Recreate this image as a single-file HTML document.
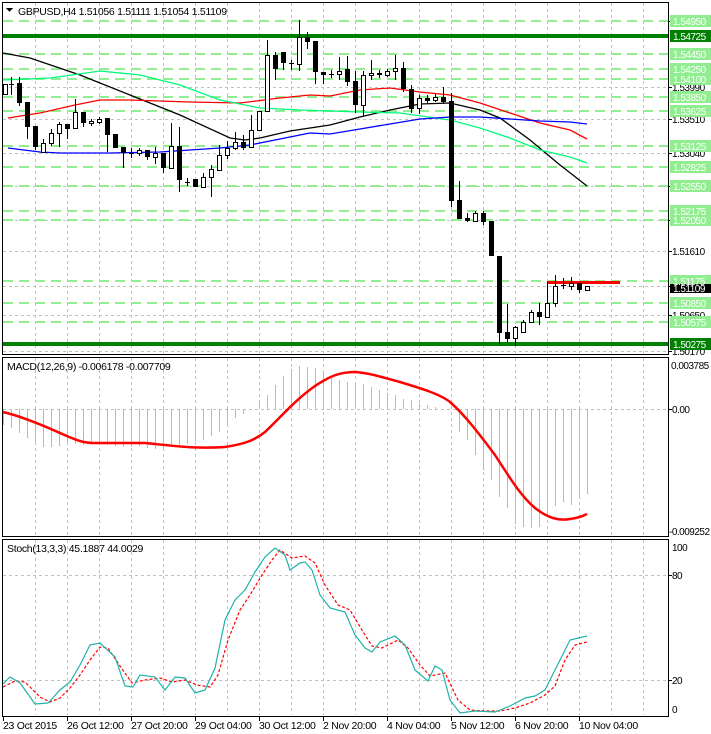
<!DOCTYPE html>
<html><head><meta charset="utf-8"><style>
html,body{margin:0;padding:0;background:#fff;width:711px;height:734px;overflow:hidden}
svg{display:block;font-family:"Liberation Sans",sans-serif;font-size:10.5px;letter-spacing:-0.3px}
.p{font-size:10px;letter-spacing:-0.5px}
</style></head><body>
<svg width="711" height="734" viewBox="0 0 711 734" xmlns="http://www.w3.org/2000/svg" shape-rendering="crispEdges">
<rect width="711" height="734" fill="#fff"/>
<g stroke="#c0c0c0" stroke-dasharray="3,3">
<path d="M35.5 3V353M67.5 3V353M99.5 3V353M131.5 3V353M163.5 3V353M195.5 3V353M227.5 3V353M259.5 3V353M291.5 3V353M323.5 3V353M355.5 3V353M387.5 3V353M419.5 3V353M451.5 3V353M483.5 3V353M515.5 3V353M547.5 3V353M579.5 3V353M611.5 3V353M643.5 3V353"/>
<path d="M35.5 358V536M67.5 358V536M99.5 358V536M131.5 358V536M163.5 358V536M195.5 358V536M227.5 358V536M259.5 358V536M291.5 358V536M323.5 358V536M355.5 358V536M387.5 358V536M419.5 358V536M451.5 358V536M483.5 358V536M515.5 358V536M547.5 358V536M579.5 358V536M611.5 358V536M643.5 358V536"/>
<path d="M35.5 540V715M67.5 540V715M99.5 540V715M131.5 540V715M163.5 540V715M195.5 540V715M227.5 540V715M259.5 540V715M291.5 540V715M323.5 540V715M355.5 540V715M387.5 540V715M419.5 540V715M451.5 540V715M483.5 540V715M515.5 540V715M547.5 540V715M579.5 540V715M611.5 540V715M643.5 540V715"/>
<path d="M3 87.5H668M3 119.5H668M3 153.5H668M3 186.5H668M3 220.5H668M3 251.5H668M3 286.5H668M3 315.5H668M3 351.5H668"/>
<path d="M3 409.5H668M3 575.5H668M3 680.5H668"/>
</g>
<g stroke="#90ee90" stroke-width="2" stroke-dasharray="10,6">
<path d="M3 21H668M3 54H668M3 69H668M3 79H668M3 97H668M3 111H668M3 146H668M3 167H668M3 186H668M3 211H668M3 220H668M3 281H668M3 303H668M3 322H668"/>
</g>
<g stroke="#008000" stroke-width="4"><path d="M3 36H668M3 344H668"/></g>
<g fill="none" stroke-width="1.3" shape-rendering="auto">
<polyline stroke="#000" points="3,53 30,58 80,75 130,95 180,115 230,138 245,140 260,138 290,131 330,125 360,117 390,110 420,104 450,103 480,110 500,118 530,140 560,165 587,186"/>
<polyline stroke="#ff0000" points="8,118 40,113 75,105 100,100 130,100 190,102 240,103 280,98 310,95 330,96 360,90 390,88 420,92 450,95 480,103 510,113 540,123 570,130 587,139"/>
<polyline stroke="#00fa7a" points="3,80 50,78 100,71 140,75 180,85 220,100 260,108 300,110 330,111 360,112 400,113 450,120 480,128 510,138 540,150 570,157 587,163"/>
<polyline stroke="#0000ff" points="8,148 40,152 60,153 110,153 160,152 220,148 250,145 280,139 310,133 330,134 360,129 390,124 420,119 450,117 480,117 510,119 540,121 570,122 587,124"/>
</g>
<rect x="547" y="281" width="73" height="3" fill="#ff0000"/>
<g stroke="#000"><path d="M11.5 77V95M19.5 77V106M27.5 102V139M35.5 126V150M43.5 139V153M51.5 129V146M59.5 122V147M67.5 124V139M75.5 99V129M83.5 112V127M91.5 119V126M99.5 117V124M107.5 118V152M115.5 134V148M123.5 147V168M131.5 148V158M139.5 148V156M147.5 150V160M155.5 147V164M163.5 153V173M171.5 123V168M179.5 127V192M187.5 178V186M195.5 179V187M203.5 173V187M211.5 165V197M219.5 145V170M227.5 141V159M235.5 132V150M243.5 135V150M251.5 115V147M259.5 111V130M267.5 40V111M275.5 52V80M283.5 52V70M291.5 60V70M299.5 20V71M307.5 32V49M315.5 41V84M323.5 72V84M331.5 70V78M339.5 57V80M347.5 56V86M355.5 71V113M363.5 71V116M371.5 60V80M379.5 70V78M387.5 69V77M395.5 55V80M403.5 62V92M411.5 85V113M419.5 95V114M427.5 95V103M435.5 94V102M443.5 87V104M451.5 93V207M459.5 181V219M467.5 213V222M475.5 211V222M483.5 211V225M491.5 221V256M499.5 256V344M507.5 304V342M515.5 326V346M523.5 320V332M531.5 310V322M539.5 303V325M547.5 282V317M555.5 275V307M563.5 278V289M571.5 277V290M579.5 283V293"/></g>
<g fill="#000">
<rect x="17" y="83" width="5" height="20"/><rect x="25" y="102" width="5" height="25"/><rect x="33" y="126" width="5" height="21"/><rect x="65" y="124" width="5" height="5"/><rect x="81" y="112" width="5" height="11"/><rect x="105" y="118" width="5" height="17"/><rect x="113" y="134" width="5" height="14"/><rect x="121" y="147" width="5" height="6"/><rect x="145" y="150" width="5" height="7"/><rect x="161" y="153" width="5" height="15"/><rect x="177" y="146" width="5" height="34"/><rect x="193" y="179" width="5" height="8"/><rect x="241" y="142" width="5" height="6"/><rect x="273" y="55" width="5" height="14"/><rect x="281" y="52" width="5" height="11"/><rect x="305" y="37" width="5" height="5"/><rect x="313" y="41" width="5" height="31"/><rect x="321" y="72" width="5" height="3"/><rect x="345" y="69" width="5" height="13"/><rect x="353" y="81" width="5" height="24"/><rect x="377" y="73" width="5" height="2"/><rect x="401" y="68" width="5" height="21"/><rect x="409" y="89" width="5" height="20"/><rect x="425" y="98" width="5" height="3"/><rect x="441" y="97" width="5" height="5"/><rect x="449" y="101" width="5" height="100"/><rect x="457" y="200" width="5" height="19"/><rect x="465" y="218" width="5" height="3"/><rect x="481" y="213" width="5" height="9"/><rect x="489" y="221" width="5" height="35"/><rect x="497" y="256" width="5" height="77"/><rect x="505" y="332" width="5" height="7"/><rect x="537" y="312" width="5" height="5"/><rect x="577" y="283" width="5" height="7"/>
</g>
<g fill="#fff" stroke="#000">
<rect x="3.5" y="84.5" width="4" height="10"/><rect x="41.5" y="143.5" width="4" height="9"/><rect x="49.5" y="133.5" width="4" height="10"/><rect x="57.5" y="124.5" width="4" height="9"/><rect x="73.5" y="112.5" width="4" height="16"/><rect x="89.5" y="121.5" width="4" height="2"/><rect x="97.5" y="119.5" width="4" height="3"/><rect x="137.5" y="150.5" width="4" height="3"/><rect x="153.5" y="153.5" width="4" height="4"/><rect x="169.5" y="146.5" width="4" height="22"/><rect x="201.5" y="177.5" width="4" height="10"/><rect x="209.5" y="169.5" width="4" height="8"/><rect x="217.5" y="155.5" width="4" height="15"/><rect x="225.5" y="148.5" width="4" height="7"/><rect x="233.5" y="142.5" width="4" height="6"/><rect x="249.5" y="130.5" width="4" height="17"/><rect x="257.5" y="111.5" width="4" height="19"/><rect x="265.5" y="55.5" width="4" height="56"/><rect x="297.5" y="37.5" width="4" height="27"/><rect x="337.5" y="71.5" width="4" height="3"/><rect x="361.5" y="75.5" width="4" height="30"/><rect x="369.5" y="73.5" width="4" height="2"/><rect x="385.5" y="71.5" width="4" height="4"/><rect x="393.5" y="68.5" width="4" height="3"/><rect x="417.5" y="98.5" width="4" height="10"/><rect x="433.5" y="97.5" width="4" height="3"/><rect x="473.5" y="213.5" width="4" height="8"/><rect x="513.5" y="327.5" width="4" height="11"/><rect x="521.5" y="322.5" width="4" height="10"/><rect x="529.5" y="312.5" width="4" height="10"/><rect x="545.5" y="303.5" width="4" height="14"/><rect x="553.5" y="286.5" width="4" height="17"/><rect x="569.5" y="283.5" width="4" height="3"/><rect x="585.5" y="286.5" width="4" height="4"/>
</g>
<g stroke="#000"><path d="M9 84.5H14M129 153.5H134M185 182.5H190M289 63.5H294M329 74.5H334M561 285.5H566"/></g>
<g stroke="#b8b8b8"><path d="M3.5 409V425M11.5 409V428M19.5 409V433M27.5 409V438M35.5 409V442M43.5 409V447M51.5 409V447M59.5 409V446M67.5 409V445M75.5 409V444M83.5 409V445M91.5 409V444M99.5 409V443M107.5 409V445M115.5 409V446M123.5 409V447M131.5 409V447M139.5 409V446M147.5 409V448M155.5 409V449M163.5 409V448M171.5 409V447M179.5 409V445M187.5 409V444M195.5 409V441M203.5 409V440M211.5 409V436M219.5 409V432M227.5 409V425M235.5 409V418M243.5 409V414M259.5 409V400M267.5 409V395M275.5 409V385M283.5 409V376M291.5 409V369M299.5 409V366M307.5 409V367M315.5 409V368M323.5 409V372M331.5 409V378M339.5 409V380M347.5 409V382M355.5 409V383M363.5 409V384M371.5 409V387M379.5 409V390M387.5 409V393M395.5 409V395M403.5 409V399M411.5 409V400M419.5 409V404M427.5 409V405M435.5 409V407M459.5 409V432M467.5 409V440M475.5 409V455M483.5 409V470M491.5 409V480M499.5 409V497M507.5 409V508M515.5 409V524M523.5 409V527M531.5 409V528M539.5 409V527M547.5 409V515M555.5 409V506M563.5 409V502M571.5 409V505M579.5 409V498M587.5 409V494"/></g>
<path fill="none" stroke="#ff0000" stroke-width="2.5" shape-rendering="auto" d="M3 412 C20 416 40 424 60 433 S85 443 95 443 L145 443 C175 446 195 449 225 447 C245 444 255 440 265 432 C280 418 295 400 315 386 C330 376 340 372 355 372 C370 373 385 378 400 382 C420 388 440 394 450 402 C465 415 480 435 495 455 C510 478 520 495 535 508 C548 518 558 521 570 519 C578 518 583 516 587 514"/>
<polyline fill="none" stroke="#ff0000" stroke-width="1.2" stroke-dasharray="3,2" shape-rendering="auto" points="3,687 15,681 25,682 40,697 50,702 60,698 70,688 80,675 90,660 100,647 108,648 120,666 132,683 145,680 160,678 172,682 185,680 197,685 210,687 218,675 228,640 240,610 250,595 262,575 272,560 280,550 292,558 305,556 315,563 325,585 338,605 350,610 362,630 372,646 382,648 398,640 408,648 420,665 430,676 445,673 458,700 470,710 485,711 500,711 515,708 530,703 545,695 555,686 565,660 575,645 587,642"/>
<polyline fill="none" stroke="#20b2aa" stroke-width="1.2" shape-rendering="auto" points="3,684 10,677 20,683 35,704 48,703 60,690 70,682 80,665 90,645 100,643 115,657 125,686 133,687 140,675 155,677 165,690 175,677 185,678 195,693 205,690 215,668 225,620 235,600 245,590 255,572 265,557 275,548 285,555 290,570 300,563 305,562 312,570 320,595 330,608 345,612 355,635 365,648 372,652 380,642 395,636 405,645 415,670 428,681 435,666 442,670 450,700 460,713 475,711 495,712 510,706 525,698 535,696 545,690 560,660 570,640 587,636"/>
<g fill="none" stroke="#000"><rect x="2.5" y="2.5" width="666" height="352"/><rect x="2.5" y="357.5" width="666" height="179"/><rect x="2.5" y="539.5" width="666" height="177"/></g>
<g stroke="#000"><path d="M668 21.5H672M668 87.5H672M668 119.5H672M668 153.5H672M668 186.5H672M668 220.5H672M668 251.5H672M668 286.5H672M668 315.5H672M668 351.5H672M668 409.5H672M668 575.5H672M668 680.5H672M3.5 716V721M67.5 716V721M131.5 716V721M195.5 716V721M259.5 716V721M323.5 716V721M387.5 716V721M451.5 716V721M515.5 716V721M579.5 716V721"/></g>
<g fill="#000" class="p">
<text x="672" y="91">1.53990</text><text x="672" y="123">1.53510</text><text x="672" y="157">1.53040</text><text x="672" y="255">1.51610</text><text x="672" y="319">1.50650</text><text x="672" y="355">1.50170</text>
<text x="671" y="369">0.003785</text><text x="672" y="413">0.00</text><text x="669" y="535">-0.009252</text>
<text x="672" y="551">100</text><text x="672" y="579">80</text><text x="672" y="684">20</text><text x="672" y="713">0</text>
</g>
<g fill="#90ee90">
<rect x="670" y="15" width="41" height="12"/><rect x="670" y="48" width="41" height="12"/><rect x="670" y="63" width="41" height="12"/><rect x="670" y="73" width="41" height="12"/><rect x="670" y="91" width="41" height="12"/><rect x="670" y="105" width="41" height="12"/><rect x="670" y="140" width="41" height="12"/><rect x="670" y="161" width="41" height="12"/><rect x="670" y="180" width="41" height="12"/><rect x="670" y="205" width="41" height="12"/><rect x="670" y="214" width="41" height="12"/><rect x="670" y="275" width="41" height="12"/><rect x="670" y="297" width="41" height="12"/><rect x="670" y="316" width="41" height="12"/>
</g>
<rect x="670" y="30" width="41" height="12" fill="#008000"/><rect x="670" y="338" width="41" height="12" fill="#008000"/>
<rect x="670" y="284" width="41" height="9" fill="#000"/>
<g fill="#fff" class="p">
<text x="673" y="25">1.54950</text><text x="673" y="40">1.54725</text><text x="673" y="58">1.54450</text><text x="673" y="73">1.54250</text><text x="673" y="83">1.54100</text><text x="673" y="101">1.53850</text><text x="673" y="115">1.53625</text><text x="673" y="150">1.53125</text><text x="673" y="171">1.52825</text><text x="673" y="190">1.52550</text><text x="673" y="215">1.52175</text><text x="673" y="224">1.52050</text><text x="673" y="285">1.51175</text><text x="673" y="307">1.50850</text><text x="673" y="326">1.50575</text><text x="673" y="348">1.50275</text><text x="673" y="292">1.51109</text>
</g>
<path d="M6 8H13L9.5 12Z" fill="#000"/>
<text x="18" y="15" fill="#000">GBPUSD,H4  1.51056 1.51111 1.51054 1.51109</text>
<text x="7" y="370" fill="#000">MACD(12,26,9) -0.006178 -0.007709</text>
<text x="7" y="552" fill="#000">Stoch(13,3,3) 45.1887 44.0029</text>
<g fill="#000">
<text x="3" y="729">23 Oct 2015</text><text x="67" y="729">26 Oct 12:00</text><text x="131" y="729">27 Oct 20:00</text><text x="195" y="729">29 Oct 04:00</text><text x="259" y="729">30 Oct 12:00</text><text x="323" y="729">2 Nov 20:00</text><text x="387" y="729">4 Nov 04:00</text><text x="451" y="729">5 Nov 12:00</text><text x="515" y="729">6 Nov 20:00</text><text x="579" y="729">10 Nov 04:00</text>
</g>
</svg>
</body></html>
